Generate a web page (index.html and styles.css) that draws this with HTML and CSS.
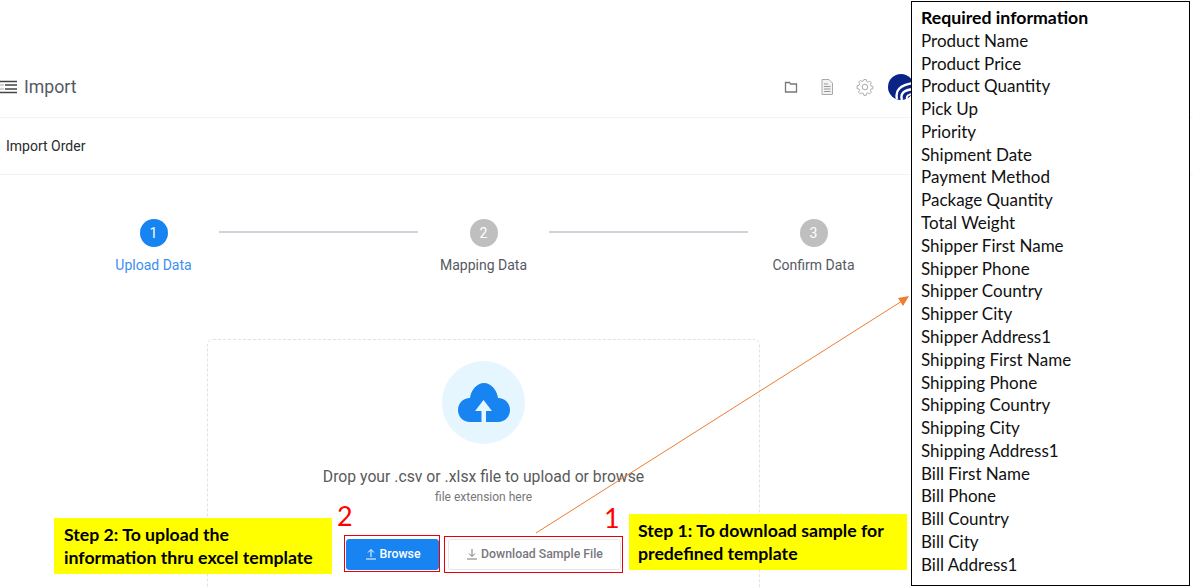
FILE: index.html
```html
<!DOCTYPE html>
<html lang="en">
<head>
<meta charset="utf-8">
<title>Import</title>
<link rel="stylesheet" href="styles.css">
</head>
<body>
<div class="page">
  <header class="topbar">
    <div class="topbar-left">
      <svg class="menu-icon" width="18" height="14" viewBox="0 0 18 14"><path d="M0 1.500h17M5 5h12M5 9h12M0 12.500h17" stroke="#444" stroke-width="1.300" fill="none"/><path d="M0 5h4M0 9h4" stroke="#aaa" stroke-width="1" fill="none"/></svg>
      <span class="page-title">Import</span>
    </div>
    <div class="topbar-right">
      <svg class="tool" width="14" height="14" viewBox="0 0 14 14"><path d="M1.500 2.500h4l1 1.500h6v8h-11z" fill="none" stroke="#777" stroke-width="1.300"/></svg>
      <svg class="tool" width="14" height="16" viewBox="0 0 14 16"><path d="M2 .5h7l3.500 3.500v11.500H2z" fill="#f2f2f2" stroke="#aaa"/><path d="M4 5h4M4 7.500h6.500M4 10h6.500M4 12.500h6.500" stroke="#999"/></svg>
      <svg class="tool" width="18" height="18" viewBox="0 0 18 18"><circle cx="9" cy="9" r="2.800" fill="none" stroke="#aaa"/><path d="M7.800 1.500h2.400l.4 2 1.500.7 1.800-1.100 1.700 1.700-1.100 1.800.6 1.500 2 .4v2.400l-2 .4-.6 1.500 1.100 1.800-1.700 1.700-1.800-1.100-1.500.6-.4 2H7.800l-.4-2-1.500-.6-1.800 1.100-1.700-1.700 1.100-1.800-.7-1.500-2-.4V7.800l2-.4.7-1.500-1.100-1.800 1.700-1.700 1.800 1.100 1.500-.7z" transform="translate(.3 .1) scale(.97)" fill="none" stroke="#aaa"/></svg>
      <svg class="avatar" width="26" height="26" viewBox="0 0 26 26"><circle cx="13" cy="13" r="13" fill="#0b2287"/><path d="M9 25C7 17 11 11 26 9M14 26c-2-6 1-10 12-11" fill="none" stroke="#fff" stroke-width="2.400"/><path d="M19 26c-1-4 1-6 7-6" fill="none" stroke="#fff" stroke-width="2"/></svg>
    </div>
  </header>
  <div class="subbar">Import Order</div>
  <div class="stepper">
    <div class="step step-active"><span class="step-num">1</span><span class="step-label">Upload Data</span></div>
    <div class="step-line"></div>
    <div class="step"><span class="step-num">2</span><span class="step-label">Mapping Data</span></div>
    <div class="step-line"></div>
    <div class="step"><span class="step-num">3</span><span class="step-label">Confirm Data</span></div>
  </div>
  <section class="dropzone">
    <div class="cloud-circle">
      <svg width="52" height="39" viewBox="0 0 52 39"><path d="M12 39C5 39 0 33.500 0 27 0 20.500 5 15 12 15 13 7 19 0 26 0s13 7 14 15C47 15 52 20.500 52 27 52 33.500 47 39 40 39H28V28h6L25.500 17 17 28h6.500V39z" fill="#1784f2"/></svg>
    </div>
    <p class="drop-title">Drop your .csv or .xlsx file to upload or browse</p>
    <p class="drop-sub">file extension here</p>
    <div class="actions">
      <button class="btn btn-primary"><svg width="12" height="12" viewBox="0 0 12 12"><path d="M1 11h10M6 9V2M3 4.500 6 1.500l3 3" fill="none" stroke="#fff" stroke-width="1"/></svg>Browse</button>
      <button class="btn btn-default"><svg width="12" height="12" viewBox="0 0 12 12"><path d="M1 11h10M6 1v7M3 5.500 6 8.500l3-3" fill="none" stroke="#777" stroke-width="1"/></svg>Download Sample File</button>
    </div>
  </section>

  <aside class="info-box">
    <strong>Required information</strong>
    <span>Product Name</span><span>Product Price</span><span>Product Quantity</span><span>Pick Up</span><span>Priority</span><span>Shipment Date</span><span>Payment Method</span><span>Package Quantity</span><span>Total Weight</span><span>Shipper First Name</span><span>Shipper Phone</span><span>Shipper Country</span><span>Shipper City</span><span>Shipper Address1</span><span>Shipping First Name</span><span>Shipping Phone</span><span>Shipping Country</span><span>Shipping City</span><span>Shipping Address1</span><span>Bill First Name</span><span>Bill Phone</span><span>Bill Country</span><span>Bill City</span><span>Bill Address1</span>
  </aside>
  <div class="note note-two">Step 2: To upload the<br>information thru excel template</div>
  <div class="note note-one">Step 1: To download sample for<br>predefined template</div>
  <span class="num num-two">2</span>
  <span class="num num-one">1</span>
  <div class="mark mark-browse"></div>
  <div class="mark mark-download"></div>
  <svg class="arrow" width="1193" height="588" viewBox="0 0 1193 588"><path d="M536 533 902 301" stroke="#ed7d31" stroke-width="1" fill="none"/><path d="M909 296 898 298 903 306z" fill="#ed7d31"/></svg>
</div>
</body>
</html>
```
FILE: styles.css
```css
* { box-sizing: border-box; }
html, body { margin: 0; height: 100%; background: #fff; }
.page {
  position: relative;
  width: 1193px;
  height: 588px;
  overflow: hidden;
  padding-top: 56px;
  font-family: Roboto, "Liberation Sans", sans-serif;
}
.topbar {
  height: 62px;
  display: flex;
  align-items: center;
  justify-content: space-between;
  border-bottom: 1px solid #f3f3f3;
  padding-right: 279px;
}
.topbar-left { display: flex; align-items: center; gap: 6px; }
.menu-icon { display: block; }
.page-title { font-size: 17.700px; color: #555a62; }
.topbar-right { display: flex; align-items: center; gap: 22px; }
.tool, .avatar { display: block; }
.avatar { margin-left: -8px; }
.subbar {
  height: 57px;
  display: flex;
  align-items: center;
  padding-left: 6px;
  font-size: 14px;
  color: #2b2b2b;
  border-bottom: 1px solid #f3f3f3;
}
.stepper {
  display: flex;
  align-items: flex-start;
  padding: 44px 0 0 88px;
  height: 164px;
}
.step { width: 131px; display: flex; flex-direction: column; align-items: center; gap: 10px; flex: none; }
.step-num {
  width: 28px; height: 28px; border-radius: 50%;
  background: #bfbfbf; color: #fff;
  display: flex; align-items: center; justify-content: center;
  font-size: 14px;
}
.step-label { font-size: 14px; line-height: 16px; color: #555a62; white-space: nowrap; }
.step-active .step-num { background: #1784f2; }
.step-active .step-label { color: #3c90f0; }
.step-line { width: 199px; height: 2px; margin-top: 12px; background: #d2d2da; flex: none; }
.dropzone {
  width: 553px;
  height: 300px;
  margin-left: 207px;
  border: 1px dashed #e2e2e2;
  border-radius: 6px;
  padding-top: 21px;
  display: flex;
  flex-direction: column;
  align-items: center;
}
.cloud-circle {
  width: 83px; height: 83px; border-radius: 50%;
  background: #e6f6ff;
  display: flex; align-items: center; justify-content: center;
  flex: none;
}
.cloud-circle svg { display: block; }
.drop-title { margin: 23px 0 0; font-size: 15.750px; line-height: 20px; color: #5a5a5a; }
.drop-sub { margin: 1px 0 0; font-size: 12px; line-height: 18px; color: #777; }
.actions { display: flex; gap: 9px; margin-top: 33px; }
.btn {
  height: 31px;
  border-radius: 3px;
  font-family: inherit;
  font-size: 12.300px;
  font-weight: 500;
  display: flex;
  align-items: center;
  justify-content: center;
  gap: 3px;
  padding: 0 0 1px;
}
.btn-primary { width: 93px; background: #1784f2; border: 1px solid #1784f2; color: #fff; }
.btn-default { width: 173px; background: #fff; border: 1px solid #e6e6ea; color: #77777f; }

.info-box {
  position: absolute;
  left: 911px; top: 1px;
  width: 279px; height: 585px;
  border: 1px solid #000;
  background: #fff;
  padding: 5px 0 0 9px;
  display: flex;
  flex-direction: column;
  font-family: Lato, "Open Sans", sans-serif;
  font-size: 17px;
  line-height: 22.780px;
  color: #111;
}
.info-box strong { font-weight: 700; font-size: 17.700px; color: #000; }
.note {
  position: absolute;
  background: #ffff00;
  color: #000;
  font-family: Lato, "Open Sans", sans-serif;
  font-weight: 700;
  font-size: 17.700px;
  line-height: 23px;
  padding: 5px 0 0 10px;
  height: 56px;
}
.note-two { left: 54px; top: 518px; width: 278px; }
.note-one { left: 629px; top: 514px; width: 278px; padding-left: 9px; }
.num {
  position: absolute;
  color: #f00;
  font-family: Lato, "Open Sans", sans-serif;
  font-size: 27px;
  line-height: 32px;
}
.num-two { left: 337px; top: 500px; }
.num-one { left: 604px; top: 502px; }
.mark { position: absolute; border: 1px solid #e8000a; }
.mark-browse { left: 344px; top: 535px; width: 96px; height: 37px; }
.mark-download { left: 444px; top: 536px; width: 179px; height: 37px; }
.arrow { position: absolute; left: 0; top: 0; pointer-events: none; }
```
